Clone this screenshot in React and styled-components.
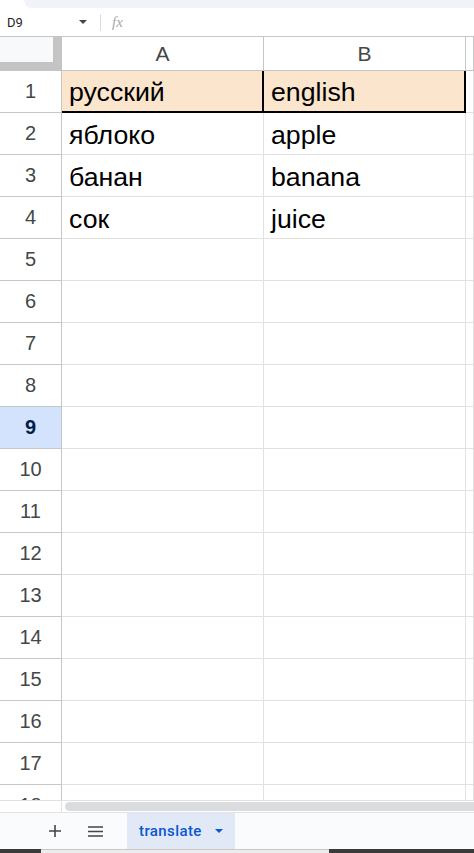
import React from 'react';
import styled, { createGlobalStyle } from 'styled-components';

const GlobalStyle = createGlobalStyle`
  html, body { margin: 0; padding: 0; background: #fff; }
  * { box-sizing: border-box; }
`;

const HEAD_LINE = '#c4c7c5';
const GRID_LINE = '#e1e1e1';

const Page = styled.div`
  width: 474px;
  height: 853px;
  overflow: hidden;
  display: flex;
  flex-direction: column;
  font-family: "Liberation Sans", Arial, sans-serif;
`;

const TopStrip = styled.div`
  height: 8px;
  margin-left: 24px;
  background: #f0f4f9;
  border-bottom-left-radius: 8px;
`;

const FormulaBar = styled.div`
  height: 29px;
  display: flex;
  align-items: center;
  border-bottom: 1px solid ${HEAD_LINE};
  padding-left: 7px;
`;

const NameBox = styled.div`
  width: 72px;
  font-family: Roboto, sans-serif;
  font-size: 13px;
  color: #1f1f1f;
`;

const Caret = styled.span`
  width: 0;
  height: 0;
  border-left: 4px solid transparent;
  border-right: 4px solid transparent;
  border-top: 4px solid ${({ $color }) => $color || '#444746'};
`;

const Separator = styled.div`
  width: 1px;
  height: 17px;
  background: #dadce0;
  margin: 0 11px 0 13px;
`;

const Fx = styled.span`
  font-family: "Liberation Serif", serif;
  font-style: italic;
  font-size: 15px;
  color: #a7a7a7;
`;

const Grid = styled.div`
  flex: 1;
  overflow: hidden;
`;

const Row = styled.div`
  display: flex;
  height: ${({ $h }) => $h}px;
`;

const Corner = styled.div`
  width: 62px;
  flex: none;
  background: #f8f9fa;
  border-right: 9px solid #c4c4c4;
  border-bottom: 9px solid #c4c4c4;
`;

const ColHead = styled.div`
  width: ${({ $w }) => $w}px;
  flex: ${({ $w }) => ($w ? 'none' : '1')};
  display: flex;
  align-items: center;
  justify-content: center;
  font-size: 21px;
  color: #444746;
  border-right: 1px solid ${HEAD_LINE};
  border-bottom: 1px solid ${HEAD_LINE};
`;

const RowHead = styled.div`
  width: 62px;
  flex: none;
  display: flex;
  align-items: center;
  justify-content: center;
  font-size: 20px;
  color: ${({ $active }) => ($active ? '#041e49' : '#444746')};
  font-weight: ${({ $active }) => ($active ? 700 : 400)};
  background: ${({ $active }) => ($active ? '#d3e3fd' : '#fff')};
  border-right: 1px solid ${HEAD_LINE};
  border-bottom: 1px solid ${HEAD_LINE};
`;

const Cell = styled.div`
  width: ${({ $w }) => $w}px;
  flex: ${({ $w }) => ($w ? 'none' : '1')};
  display: flex;
  align-items: center;
  padding: 3px 0 0 7px;
  font-size: 26.7px;
  color: #000;
  white-space: nowrap;
  background: ${({ $head }) => ($head ? '#fce5cd' : '#fff')};
  border-right: ${({ $head, $w }) => ($head && $w ? '2px solid #000' : `1px solid ${GRID_LINE}`)};
  border-bottom: ${({ $head }) => ($head ? '2px solid #000' : `1px solid ${GRID_LINE}`)};
`;

const ScrollRow = styled.div`
  height: 13px;
  flex: none;
  display: flex;
  border-top: 1px solid ${GRID_LINE};
  border-bottom: 1px solid #e3e3e3;
`;

const ScrollGutter = styled.div`
  width: 62px;
  border-right: 1px solid ${GRID_LINE};
`;

const Thumb = styled.div`
  flex: 1;
  margin: 1px 0 1px 3px;
  background: #dadce0;
  border-radius: 5px 0 0 5px;
`;

const TabBar = styled.div`
  height: 36px;
  flex: none;
  display: flex;
  align-items: stretch;
  background: #f9fbfd;
  padding-left: 44px;
`;

const IconButton = styled.div`
  width: ${({ $w }) => $w}px;
  display: flex;
  align-items: center;
  justify-content: center;
  color: #444746;
`;

const Tab = styled.div`
  margin-left: 3px;
  width: 108px;
  display: flex;
  align-items: center;
  gap: 13px;
  padding-left: 12px;
  background: #e1e9f7;
  font-family: Roboto, sans-serif;
  font-weight: 500;
  font-size: 15px;
  letter-spacing: 0.4px;
  color: #0b57d0;
`;

const OsBar = styled.div`
  height: 4px;
  flex: none;
  display: flex;
  background: #3a3a3a;
`;

const OsBarMid = styled.div`
  margin-left: 41px;
  width: 288px;
  background: #ececec;
  border-top: 1px solid #c8c8c8;
`;

const rows = [
  ['яблоко', 'apple'],
  ['банан', 'banana'],
  ['сок', 'juice'],
];

const App = () => {
  const empty = Array.from({ length: 14 }, (_, i) => i + 5);
  return (
    <Page>
      <GlobalStyle />
      <TopStrip />
      <FormulaBar>
        <NameBox>D9</NameBox>
        <Caret />
        <Separator />
        <Fx>fx</Fx>
      </FormulaBar>
      <Grid>
        <Row $h={34}>
          <Corner />
          <ColHead $w={202}>A</ColHead>
          <ColHead $w={202}>B</ColHead>
          <ColHead />
        </Row>
        <Row $h={42}>
          <RowHead>1</RowHead>
          <Cell $w={202} $head>русский</Cell>
          <Cell $w={202} $head>english</Cell>
          <Cell />
        </Row>
        {rows.map(([ru, en], i) => (
          <Row $h={42} key={ru}>
            <RowHead>{i + 2}</RowHead>
            <Cell $w={202}>{ru}</Cell>
            <Cell $w={202}>{en}</Cell>
            <Cell />
          </Row>
        ))}
        {empty.map((n) => (
          <Row $h={42} key={n}>
            <RowHead $active={n === 9}>{n}</RowHead>
            <Cell $w={202} />
            <Cell $w={202} />
            <Cell />
          </Row>
        ))}
      </Grid>
      <ScrollRow>
        <ScrollGutter />
        <Thumb />
      </ScrollRow>
      <TabBar>
        <IconButton $w={22}>
          <svg width="12" height="12" viewBox="0 0 12 12">
            <path d="M6 0v12M0 6h12" stroke="currentColor" strokeWidth="1.6" />
          </svg>
        </IconButton>
        <IconButton $w={58}>
          <svg width="15" height="11" viewBox="0 0 15 11">
            <path d="M0 1h15M0 5.5h15M0 10h15" stroke="currentColor" strokeWidth="1.6" />
          </svg>
        </IconButton>
        <Tab>
          translate
          <Caret $color="#0b57d0" />
        </Tab>
      </TabBar>
      <OsBar>
        <OsBarMid />
      </OsBar>
    </Page>
  );
};

export default App;
